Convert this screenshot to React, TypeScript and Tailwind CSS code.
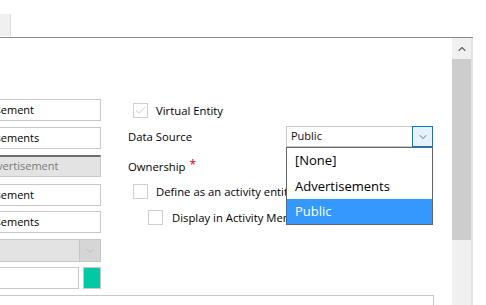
import { Check, ChevronDown, ChevronUp } from "lucide-react";

const fields = [
  { text: "Advertisement", pad: "pl-[4px]" },
  { text: "Advertisements", pad: "pl-[4px]" },
  { text: "new_advertisement", pad: "pl-[3px]", disabled: true },
  { text: "Advertisement", pad: "pl-[4px]" },
  { text: "Advertisements", pad: "pl-[4px]" },
];

function Box({ checked, disabled }: { checked?: boolean; disabled?: boolean }) {
  return (
    <div className="w-[15px] h-[15px] border border-[#cfcfcf] bg-white flex items-center justify-center shrink-0">
      {checked && (
        <Check size={13} strokeWidth={1.5} className={disabled ? "text-[#c4c4c4]" : "text-black"} />
      )}
    </div>
  );
}

export default function App() {
  return (
    <div
      className="w-[486px] h-[305px] overflow-hidden bg-white text-[11px] text-black relative"
      style={{ fontFamily: '"Open Sans", "Noto Sans", sans-serif' }}
    >
      {/* tab strip */}
      <div className="h-[38px] w-[473px] pt-[14px] border-b border-[#8a8a8a]">
        <div className="w-[11px] h-[22px] bg-[#f0f0f0] border-r border-[#dcdcdc]" />
      </div>

      <div className="flex h-[267px]">
        {/* form panel */}
        <div className="w-[452px] flex flex-col">
          <div className="flex">
            {/* left inputs */}
            <div className="w-[101px] overflow-hidden pt-[61px] shrink-0">
              <div className="-ml-[46px] w-[147px] flex flex-col">
                {fields.map((f, i) => (
                  <div
                    key={i}
                    className={
                      "h-[22px] flex items-center whitespace-nowrap border " +
                      f.pad +
                      (f.disabled
                        ? " bg-[#e3e3e3] border-[#c8c8c8] border-t-2 border-t-[#6e6e6e] text-[#7a7a7a]"
                        : " bg-white border-[#c8c8c8]") +
                      (i === 0 ? "" : i === 3 ? " mt-[7px]" : i === 4 ? " mt-[5px]" : " mt-[6px]")
                    }
                  >
                    {f.text}
                  </div>
                ))}
                <div className="mt-[6px] h-[23px] flex border border-[#c6c6c6] bg-[#e3e3e3]">
                  <div className="flex-1" />
                  <div className="w-[21px] bg-[#d6d6d6] border-l border-[#c6c6c6] flex items-center justify-center">
                    <ChevronDown size={12} strokeWidth={1.2} className="text-[#a8a8a8]" />
                  </div>
                </div>
                <div className="mt-[5px] h-[22px] flex gap-[4px]">
                  <div className="flex-1 border border-[#c8c8c8] bg-white" />
                  <div className="w-[18px] border border-[#c8c8c8] bg-[#00c9a3]" />
                </div>
              </div>
            </div>

            {/* right column */}
            <div className="ml-[27px] pt-[64px] flex flex-col text-[11.3px]">
              <div className="h-[16px] pl-[5px] flex items-center gap-[8px]">
                <Box checked disabled />
                <span className="mt-[2px]">Virtual Entity</span>
              </div>

              <div className="mt-[8px] h-[21px] flex items-center">
                <span className="w-[158px] mt-[2px]">Data Source</span>
                <div className="relative text-[11px]">
                  <div className="w-[147px] h-[21px] flex border border-[#c8c8c8] bg-white">
                    <div className="flex-1 pl-[4px] flex items-center text-[#1a0a0a]">Public</div>
                    <div className="w-[21px] -my-px -mr-px border border-[#0078d7] bg-[#e5f1fb] flex items-center justify-center">
                      <ChevronDown size={12} strokeWidth={1.3} className="text-[#333]" />
                    </div>
                  </div>
                  <div className="absolute left-0 top-[21px] w-[147px] h-[78px] border border-[#646464] bg-white text-[13px] z-10 flex flex-col">
                    <div className="h-[26px] pl-[8px] flex items-center">[None]</div>
                    <div className="h-[25px] pl-[8px] flex items-center">Advertisements</div>
                    <div className="h-[25px] pl-[8px] flex items-center bg-[#3399ff] text-white">Public</div>
                  </div>
                </div>
              </div>

              <div className="mt-[12px] h-[16px] flex items-center">
                <span>Ownership</span>
                <span className="text-[#e00000] text-[12px] ml-[4px] -mt-[5px] leading-none">*</span>
              </div>

              <div className="mt-[8px] h-[16px] pl-[5px] flex items-center gap-[8px] whitespace-nowrap">
                <Box />
                <span className="mt-[3px]">Define as an activity entity</span>
              </div>

              <div className="mt-[10px] h-[16px] pl-[20px] flex items-center gap-[9px] whitespace-nowrap">
                <Box />
                <span className="mt-[3px]">Display in Activity Menus</span>
              </div>
            </div>
          </div>

          <div className="mt-[6px] w-[434px] h-[20px] border-t border-r border-[#c8c8c8]" />
        </div>

        {/* scrollbar */}
        <div className="w-[19px] flex flex-col bg-[#f0f0f0]">
          <div className="h-[21px] flex items-center justify-center">
            <ChevronUp size={12} strokeWidth={2.2} className="text-[#606060]" />
          </div>
          <div className="h-[181px] bg-[#cdcdcd]" />
        </div>
        <div className="w-[2px] bg-[#e3e3e3]" />
      </div>
    </div>
  );
}
